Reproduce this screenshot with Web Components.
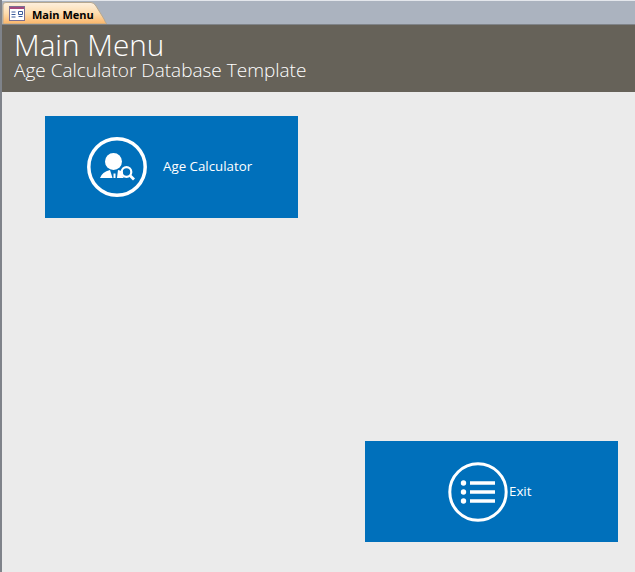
<!DOCTYPE html>
<html>
<head>
<meta charset="utf-8">
<title>Main Menu</title>
<style>
    html, body { margin: 0; height: 100%; background: #ebebeb; overflow: hidden; }
</style>
</head>
<body>
<menu-app></menu-app>
<script>
// Pestana superior del formulario
class TabStrip extends HTMLElement {
    constructor() {
        super();
        this.attachShadow({ mode: 'open' });
        this.shadowRoot.innerHTML = `
            <style>
                :host {
                    display: flex;
                    height: 25px;
                    box-sizing: border-box;
                    padding: 1px 0 0 0;
                    background: #abb3bf;
                    border-top: 1px solid #e4e7ec;
                    border-bottom: 1px solid #7f8388;
                }
                .pestana {
                    position: relative;
                    width: 105px;
                    height: 22px;
                    display: flex;
                    align-items: center;
                    gap: 7px;
                    box-sizing: border-box;
                    padding: 3px 0 0 7px;
                }
                svg.fondo { position: absolute; left: 0; top: 0; }
                .icono { position: relative; display: block; flex: none; margin-top: -2px; }
                .titulo {
                    position: relative;
                    font: bold 11px/16px "Open Sans", "Liberation Sans", sans-serif;
                    color: #000;
                }
            </style>
            <div class="pestana">
                <svg class="fondo" width="105" height="22" viewBox="0 0 105 22">
                    <defs>
                        <linearGradient id="naranja" x1="0" y1="0" x2="0" y2="1">
                            <stop offset="0" stop-color="#fdf0df"/>
                            <stop offset="0.5" stop-color="#fddcae"/>
                            <stop offset="1" stop-color="#fbb568"/>
                        </linearGradient>
                    </defs>
                    <path d="M1 22V3Q1 .5 4 .5H89Q92 .5 94 4L102 17Q103.500 21 105 22Z" fill="url(#naranja)" stroke="#b7a88f"/>
                </svg>
                <svg class="icono" width="16" height="15" viewBox="0 0 16 15">
                    <rect x="0.5" y="0.5" width="15" height="14" fill="#fff" stroke="#7a6f92"/>
                    <rect x="1" y="1" width="14" height="2" fill="#a5487c"/>
                    <path d="M2.500 6h4M2.500 8.500h4M2.500 11h4M9.500 5.500h4v3h-4zM9.500 10.500h4" stroke="#3c5c9c" fill="none"/>
                </svg>
                <span class="titulo"><slot></slot></span>
            </div>
        `;
    }
}
customElements.define('tab-strip', TabStrip);

// Cabecera oscura con titulo y subtitulo
class FormHeader extends HTMLElement {
    constructor() {
        super();
        this.attachShadow({ mode: 'open' });
        this.shadowRoot.innerHTML = `
            <style>
                :host {
                    display: block;
                    height: 67px;
                    box-sizing: border-box;
                    padding: 4px 0 0 12px;
                    background: #666259;
                    color: #fff;
                    font-family: "Open Sans", "Liberation Sans", sans-serif;
                    font-weight: 300;
                }
                .titulo { font-size: 29.700px; line-height: 31px; }
                .sub { font-size: 19px; line-height: 20px; }
            </style>
            <div class="titulo"><slot name="titulo"></slot></div>
            <div class="sub"><slot name="sub"></slot></div>
        `;
    }
}
customElements.define('form-header', FormHeader);

// Boton azul con icono redondo y etiqueta
class MenuButton extends HTMLElement {
    constructor() {
        super();
        this.attachShadow({ mode: 'open' });
        this.shadowRoot.innerHTML = `
            <style>
                :host {
                    display: flex;
                    width: 253px;
                    height: 102px;
                    align-items: center;
                    background: #0070bb;
                    color: #fff;
                    font: 13.300px "Open Sans", "Liberation Sans", sans-serif;
                    cursor: pointer;
                    box-sizing: border-box;
                    padding-left: var(--icono-x, 42px);
                    gap: var(--hueco, 16px);
                }
                ::slotted(svg) { flex: none; display: block; }
                span { padding-bottom: 2px; }
            </style>
            <slot name="icono"></slot>
            <span><slot></slot></span>
        `;
    }
}
customElements.define('menu-button', MenuButton);

// Pagina completa
class MenuApp extends HTMLElement {
    constructor() {
        super();
        this.attachShadow({ mode: 'open' });
        this.shadowRoot.innerHTML = `
            <style>
                :host { display: block; height: 572px; border-left: 2px solid #7f838a; box-sizing: border-box; }
                .cuerpo { padding: 24px 0 0 43px; }
                .salir { margin: 223px 0 0 320px; height: 101px; --icono-x: 83px; --hueco: 1px; }
                [slot] { display: block; }
            </style>
            <tab-strip>Main Menu</tab-strip>
            <form-header>
                <div slot="titulo">Main Menu</div>
                <div slot="sub">Age Calculator Database Template</div>
            </form-header>
            <div class="cuerpo">
                <menu-button>
                    <svg slot="icono" width="60" height="60" viewBox="0 0 60 60">
                        <circle cx="30" cy="30" r="28.200" fill="none" stroke="#fff" stroke-width="3.500"/>
                        <circle cx="26.500" cy="24.500" r="8.500" fill="#fff"/>
                        <path d="M13 41Q15 35 23 33L25.500 41ZM30 41L31 33Q34 33.500 36 35Q34.500 39 37 41Z" fill="#fff"/>
                        <path d="M26.500 36.500h2v4.500h-2z" fill="#fff"/>
                        <circle cx="39.500" cy="35" r="4.800" fill="none" stroke="#fff" stroke-width="2.200"/>
                        <path d="M43 38.500L47 42.500" stroke="#fff" stroke-width="2.800" fill="none"/>
                    </svg>
                    Age Calculator
                </menu-button>
                <menu-button class="salir">
                    <svg slot="icono" width="60" height="60" viewBox="0 0 60 60">
                        <circle cx="30" cy="30" r="28.200" fill="none" stroke="#fff" stroke-width="3"/>
                        <circle cx="15.500" cy="21" r="2.700" fill="#fff"/>
                        <circle cx="15.500" cy="30" r="2.700" fill="#fff"/>
                        <circle cx="15.500" cy="39" r="2.700" fill="#fff"/>
                        <path d="M22 21H47M22 30H47M22 39H47" stroke="#fff" stroke-width="3.500" fill="none"/>
                    </svg>
                    Exit
                </menu-button>
            </div>
        `;
    }
}
customElements.define('menu-app', MenuApp);
</script>
</body>
</html>
